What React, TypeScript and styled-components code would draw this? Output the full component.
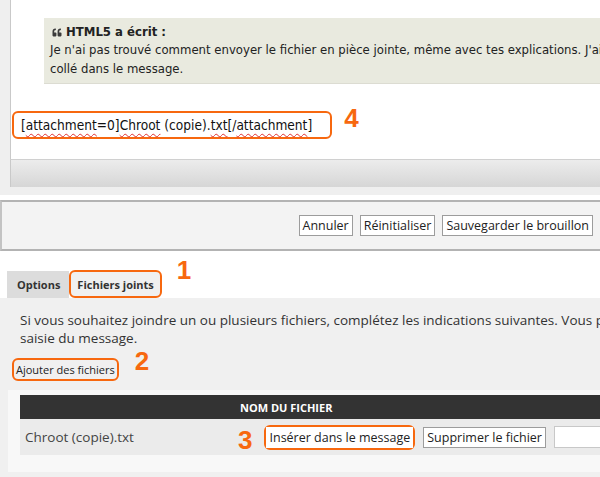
import React from "react";
import styled, { createGlobalStyle } from "styled-components";
import { FaQuoteLeft } from "react-icons/fa";

const ORANGE = "#f7680f";

const Global = createGlobalStyle`
  html, body { margin: 0; padding: 0; background: #fff; }
  body { width: 600px; height: 477px; overflow: hidden; }
  * { box-sizing: border-box; }
`;

const Page = styled.div`
  width: 600px;
  height: 477px;
  overflow: hidden;
  display: flex;
  flex-direction: column;
  font-family: "Open Sans", "Liberation Sans", sans-serif;
`;

const EditorFrame = styled.div`
  background: #efefef;
  padding: 0 0 8px 10px;
`;

const Editor = styled.div`
  background: #fff;
  border-left: 1px solid #c9c9c9;
  height: 159px;
  padding-top: 18px;
  display: flex;
  flex-direction: column;
  font-family: "DejaVu Sans Condensed", "DejaVu Sans", sans-serif;
  color: #222;
`;

const Quote = styled.blockquote`
  margin: 0 0 0 33px;
  background: #e9eadf;
  border-bottom: 1px solid #dcdcd2;
  padding: 6px 0 5px 6px;
  font-size: 13px;
  line-height: 19px;
  white-space: nowrap;
  overflow: hidden;
`;

const QuoteHead = styled.div`
  font-weight: bold;
  font-size: 13px;
  line-height: 16px;
  display: flex;
  align-items: center;
  gap: 4px;
  padding-left: 2px;
`;

const QuoteMark = styled(FaQuoteLeft)`
  width: 10px;
  height: 9px;
  color: #3a3a3a;
  margin-top: 1px;
`;

const CodeLine = styled.div`
  display: flex;
  align-items: flex-start;
  margin: 27px 0 0 1px;
`;

const Highlight = styled.span<{ $pad?: string }>`
  display: inline-flex;
  align-items: center;
  border: 2px solid ${ORANGE};
  border-radius: 6px;
  padding: ${(p) => p.$pad ?? "0"};
`;

const CodeText = styled.span`
  font-size: 13.6px;
  line-height: 24px;
  color: #111;
  white-space: nowrap;
`;

const Spell = styled.span`
  text-decoration: underline wavy #e03030;
  text-decoration-thickness: 1px;
  text-underline-offset: 3px;
`;

const Num = styled.span<{ $mt?: number; $ml?: number; $top?: boolean }>`
  font-family: "Liberation Sans", Arial, sans-serif;
  font-weight: bold;
  font-size: 26px;
  line-height: 26px;
  color: ${ORANGE};
  margin-top: ${(p) => p.$mt ?? 0}px;
  margin-left: ${(p) => p.$ml ?? 0}px;
  align-self: ${(p) => (p.$top ? "flex-start" : "auto")};
`;

const ToolBar = styled.div`
  height: 28px;
  border-left: 1px solid #c9c9c9;
  border-top: 1px solid #d0d0d0;
  background: linear-gradient(#ececec, #d6d6d6);
`;

const ActionPanel = styled.div`
  margin-top: 5px;
  height: 51px;
  flex-shrink: 0;
  background: #f3f3f3;
  border-top: 2px solid #b3b3b3;
  border-bottom: 2px solid #b3b3b3;
  border-left: 2px solid #c3c3c3;
  display: flex;
  align-items: center;
  justify-content: flex-end;
  gap: 7px;
  padding-right: 7px;
`;

const Button = styled.button<{ $bare?: boolean; $ml?: number }>`
  font-family: "Open Sans", "Liberation Sans", sans-serif;
  font-size: 12.5px;
  color: #222;
  background: #fff;
  border: ${(p) => (p.$bare ? "none" : "1px solid #9c9c9c")};
  border-radius: 0;
  padding: 1px 3px;
  height: 21px;
  line-height: 17px;
  margin: 0 0 0 ${(p) => p.$ml ?? 0}px;
  white-space: nowrap;
`;

const TabsRow = styled.div`
  margin-top: 18px;
  display: flex;
  align-items: flex-end;
  padding-left: 7px;
  height: 29px;
  flex-shrink: 0;
`;

const Tab = styled.div`
  height: 27px;
  background: #dcdcdc;
  font-size: 11px;
  font-weight: 700;
  color: #333;
  display: flex;
  align-items: center;
  padding: 0 9px 0 10px;
`;

const ActiveTab = styled(Highlight)`
  height: 28px;
  background: #f0f0f0;
  font-size: 11px;
  font-weight: 700;
  color: #333;
  padding: 0 6px;
`;

const Panel = styled.div`
  flex: 1;
  background: #f0f0f0;
  padding: 13px 0 0 0;
  color: #333;
`;

const Intro = styled.p`
  margin: 0 0 0 20px;
  font-size: 13.5px;
  line-height: 18px;
  white-space: nowrap;
`;

const AddRow = styled.div`
  display: flex;
  align-items: flex-start;
  margin: 11px 0 0 12px;
  height: 32px;
`;

const LinkButton = styled.span`
  font-size: 11px;
  line-height: 17px;
  color: #222;
  padding: 0 1px;
`;

const TableBox = styled.div`
  margin: 0 0 0 8px;
  background: #f8f8f8;
  padding: 5px 0 17px 12px;
`;

const HeadRow = styled.div`
  background: #333;
  height: 24px;
  display: flex;
  align-items: center;
  padding-left: 220px;
  color: #fff;
  font-size: 11px;
  font-weight: 700;
`;

const FileRow = styled.div`
  background: #ebebeb;
  height: 36px;
  display: grid;
  grid-template-columns: 218px auto auto 1fr;
  align-items: center;
  color: #444;
`;

const FileName = styled.span`
  font-size: 13.5px;
  padding-left: 5px;
`;

const InsertCell = styled.div`
  display: flex;
  align-items: center;
  gap: 12px;
`;

const TextInput = styled.input`
  height: 22px;
  margin-left: 8px;
  border: 1px solid #c8c8c8;
  background: #fff;
  width: 100%;
`;

export default function App() {
  return (
    <Page>
      <Global />
      <EditorFrame>
        <Editor>
          <Quote>
            <QuoteHead>
              <QuoteMark />
              HTML5 a écrit :
            </QuoteHead>
            <div>
              Je n'ai pas trouvé comment envoyer le fichier en pièce jointe, même avec tes explications. J'ai
            </div>
            <div>collé dans le message.</div>
          </Quote>
          <CodeLine>
            <Highlight $pad="0 18px 0 7px">
              <CodeText>
                [<Spell>attachment</Spell>=0]<Spell>Chroot</Spell> (copie).<Spell>txt</Spell>[/<Spell>attachment</Spell>]
              </CodeText>
            </Highlight>
            <Num $mt={-6} $ml={12}>4</Num>
          </CodeLine>
        </Editor>
        <ToolBar />
      </EditorFrame>
      <ActionPanel>
        <Button>Annuler</Button>
        <Button>Réinitialiser</Button>
        <Button>Sauvegarder le brouillon</Button>
      </ActionPanel>
      <TabsRow>
        <Tab>Options</Tab>
        <ActiveTab>Fichiers joints</ActiveTab>
        <Num $top $mt={-12} $ml={15}>1</Num>
      </TabsRow>
      <Panel>
        <Intro>
          Si vous souhaitez joindre un ou plusieurs fichiers, complétez les indications suivantes. Vous pouvez également
          <br />
          saisie du message.
        </Intro>
        <AddRow>
          <Highlight $pad="1px 1px">
            <LinkButton>Ajouter des fichiers</LinkButton>
          </Highlight>
          <Num $mt={-10} $ml={16}>2</Num>
        </AddRow>
        <TableBox>
          <HeadRow>NOM DU FICHIER</HeadRow>
          <FileRow>
            <FileName>Chroot (copie).txt</FileName>
            <InsertCell>
              <Num $mt={6}>3</Num>
              <Highlight>
                <Button $bare>Insérer dans le message</Button>
              </Highlight>
            </InsertCell>
            <Button $ml={8}>Supprimer le fichier</Button>
            <TextInput />
          </FileRow>
        </TableBox>
      </Panel>
    </Page>
  );
}
